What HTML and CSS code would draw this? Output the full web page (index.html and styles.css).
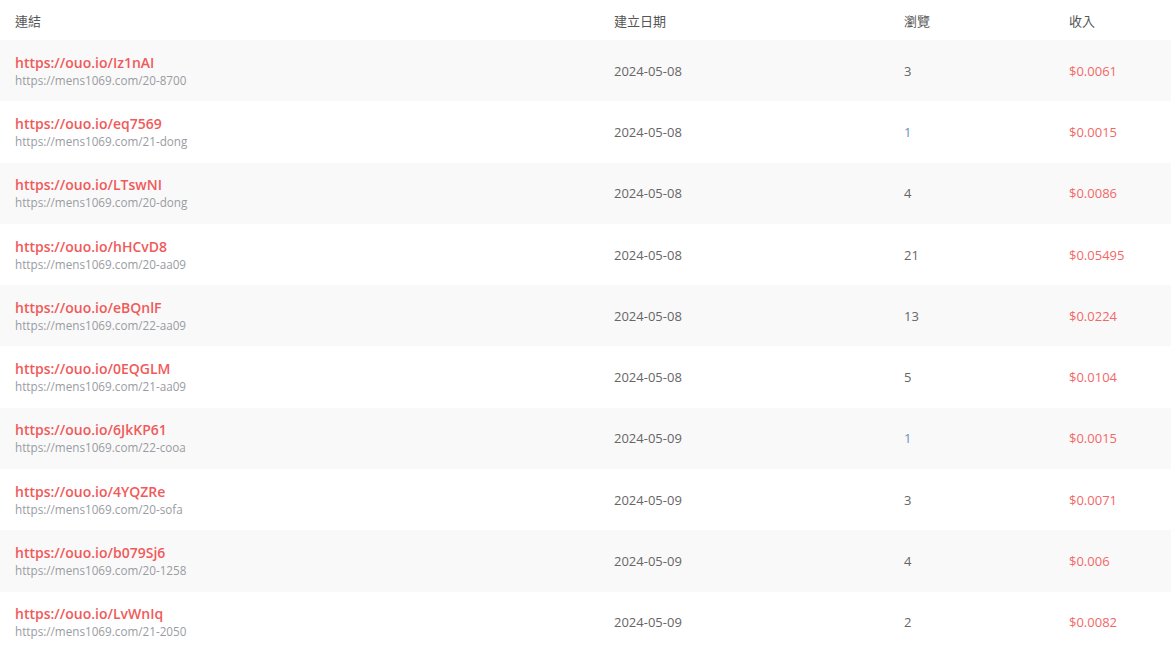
FILE: index.html
```html
<!DOCTYPE html>
<html lang="zh-Hant">
<head>
<meta charset="utf-8">
<link rel="stylesheet" href="styles.css">
</head>
<body>
<table class="links">
  <colgroup>
    <col class="c1"><col class="c2"><col class="c3"><col class="c4">
  </colgroup>
  <thead>
    <tr><th>連結</th><th>建立日期</th><th>瀏覽</th><th>收入</th></tr>
  </thead>
  <tbody>
    <tr><td><a class="short">https://ouo.io/Iz1nAI</a><div class="orig">https://mens1069.com/20-8700</div></td><td>2024-05-08</td><td>3</td><td class="money">$0.0061</td></tr>
    <tr><td><a class="short">https://ouo.io/eq7569</a><div class="orig">https://mens1069.com/21-dong</div></td><td>2024-05-08</td><td class="blue">1</td><td class="money">$0.0015</td></tr>
    <tr><td><a class="short">https://ouo.io/LTswNI</a><div class="orig">https://mens1069.com/20-dong</div></td><td>2024-05-08</td><td>4</td><td class="money">$0.0086</td></tr>
    <tr><td><a class="short">https://ouo.io/hHCvD8</a><div class="orig">https://mens1069.com/20-aa09</div></td><td>2024-05-08</td><td>21</td><td class="money">$0.05495</td></tr>
    <tr><td><a class="short">https://ouo.io/eBQnlF</a><div class="orig">https://mens1069.com/22-aa09</div></td><td>2024-05-08</td><td>13</td><td class="money">$0.0224</td></tr>
    <tr><td><a class="short">https://ouo.io/0EQGLM</a><div class="orig">https://mens1069.com/21-aa09</div></td><td>2024-05-08</td><td>5</td><td class="money">$0.0104</td></tr>
    <tr><td><a class="short">https://ouo.io/6JkKP61</a><div class="orig">https://mens1069.com/22-cooa</div></td><td>2024-05-09</td><td class="blue">1</td><td class="money">$0.0015</td></tr>
    <tr><td><a class="short">https://ouo.io/4YQZRe</a><div class="orig">https://mens1069.com/20-sofa</div></td><td>2024-05-09</td><td>3</td><td class="money">$0.0071</td></tr>
    <tr><td><a class="short">https://ouo.io/b079Sj6</a><div class="orig">https://mens1069.com/20-1258</div></td><td>2024-05-09</td><td>4</td><td class="money">$0.006</td></tr>
    <tr><td><a class="short">https://ouo.io/LvWnIq</a><div class="orig">https://mens1069.com/21-2050</div></td><td>2024-05-09</td><td>2</td><td class="money">$0.0082</td></tr>
  </tbody>
</table>
</body>
</html>
```
FILE: styles.css
```css
html, body {
  margin: 0;
  padding: 0;
  background: #fff;
}
body {
  font-family: "Open Sans", "Noto Sans CJK TC", sans-serif;
  color: #666;
  font-size: 13px;
}
.links {
  width: 1171px;
  border-collapse: collapse;
  table-layout: fixed;
}
.c1 { width: 599px; }
.c2 { width: 290px; }
.c3 { width: 165px; }
.c4 { width: 117px; }
.links th {
  height: 40px;
  padding: 0 15px;
  text-align: left;
  font-weight: 400;
  font-size: 13px;
  color: #555;
  vertical-align: middle;
}
.links td {
  height: 61.3px;
  padding: 0 15px;
  vertical-align: middle;
  box-sizing: border-box;
}
.links tbody tr:nth-child(odd) {
  background: #f9f9f9;
}
.short {
  display: block;
  color: #f05a5a;
  font-weight: 600;
  font-size: 14px;
  line-height: 19px;
  text-decoration: none;
}
.orig {
  color: #9a9ca2;
  font-size: 11.7px;
  line-height: 17px;
}
.money {
  color: #f26868;
}
.blue {
  color: #6a8fc0;
}
```
